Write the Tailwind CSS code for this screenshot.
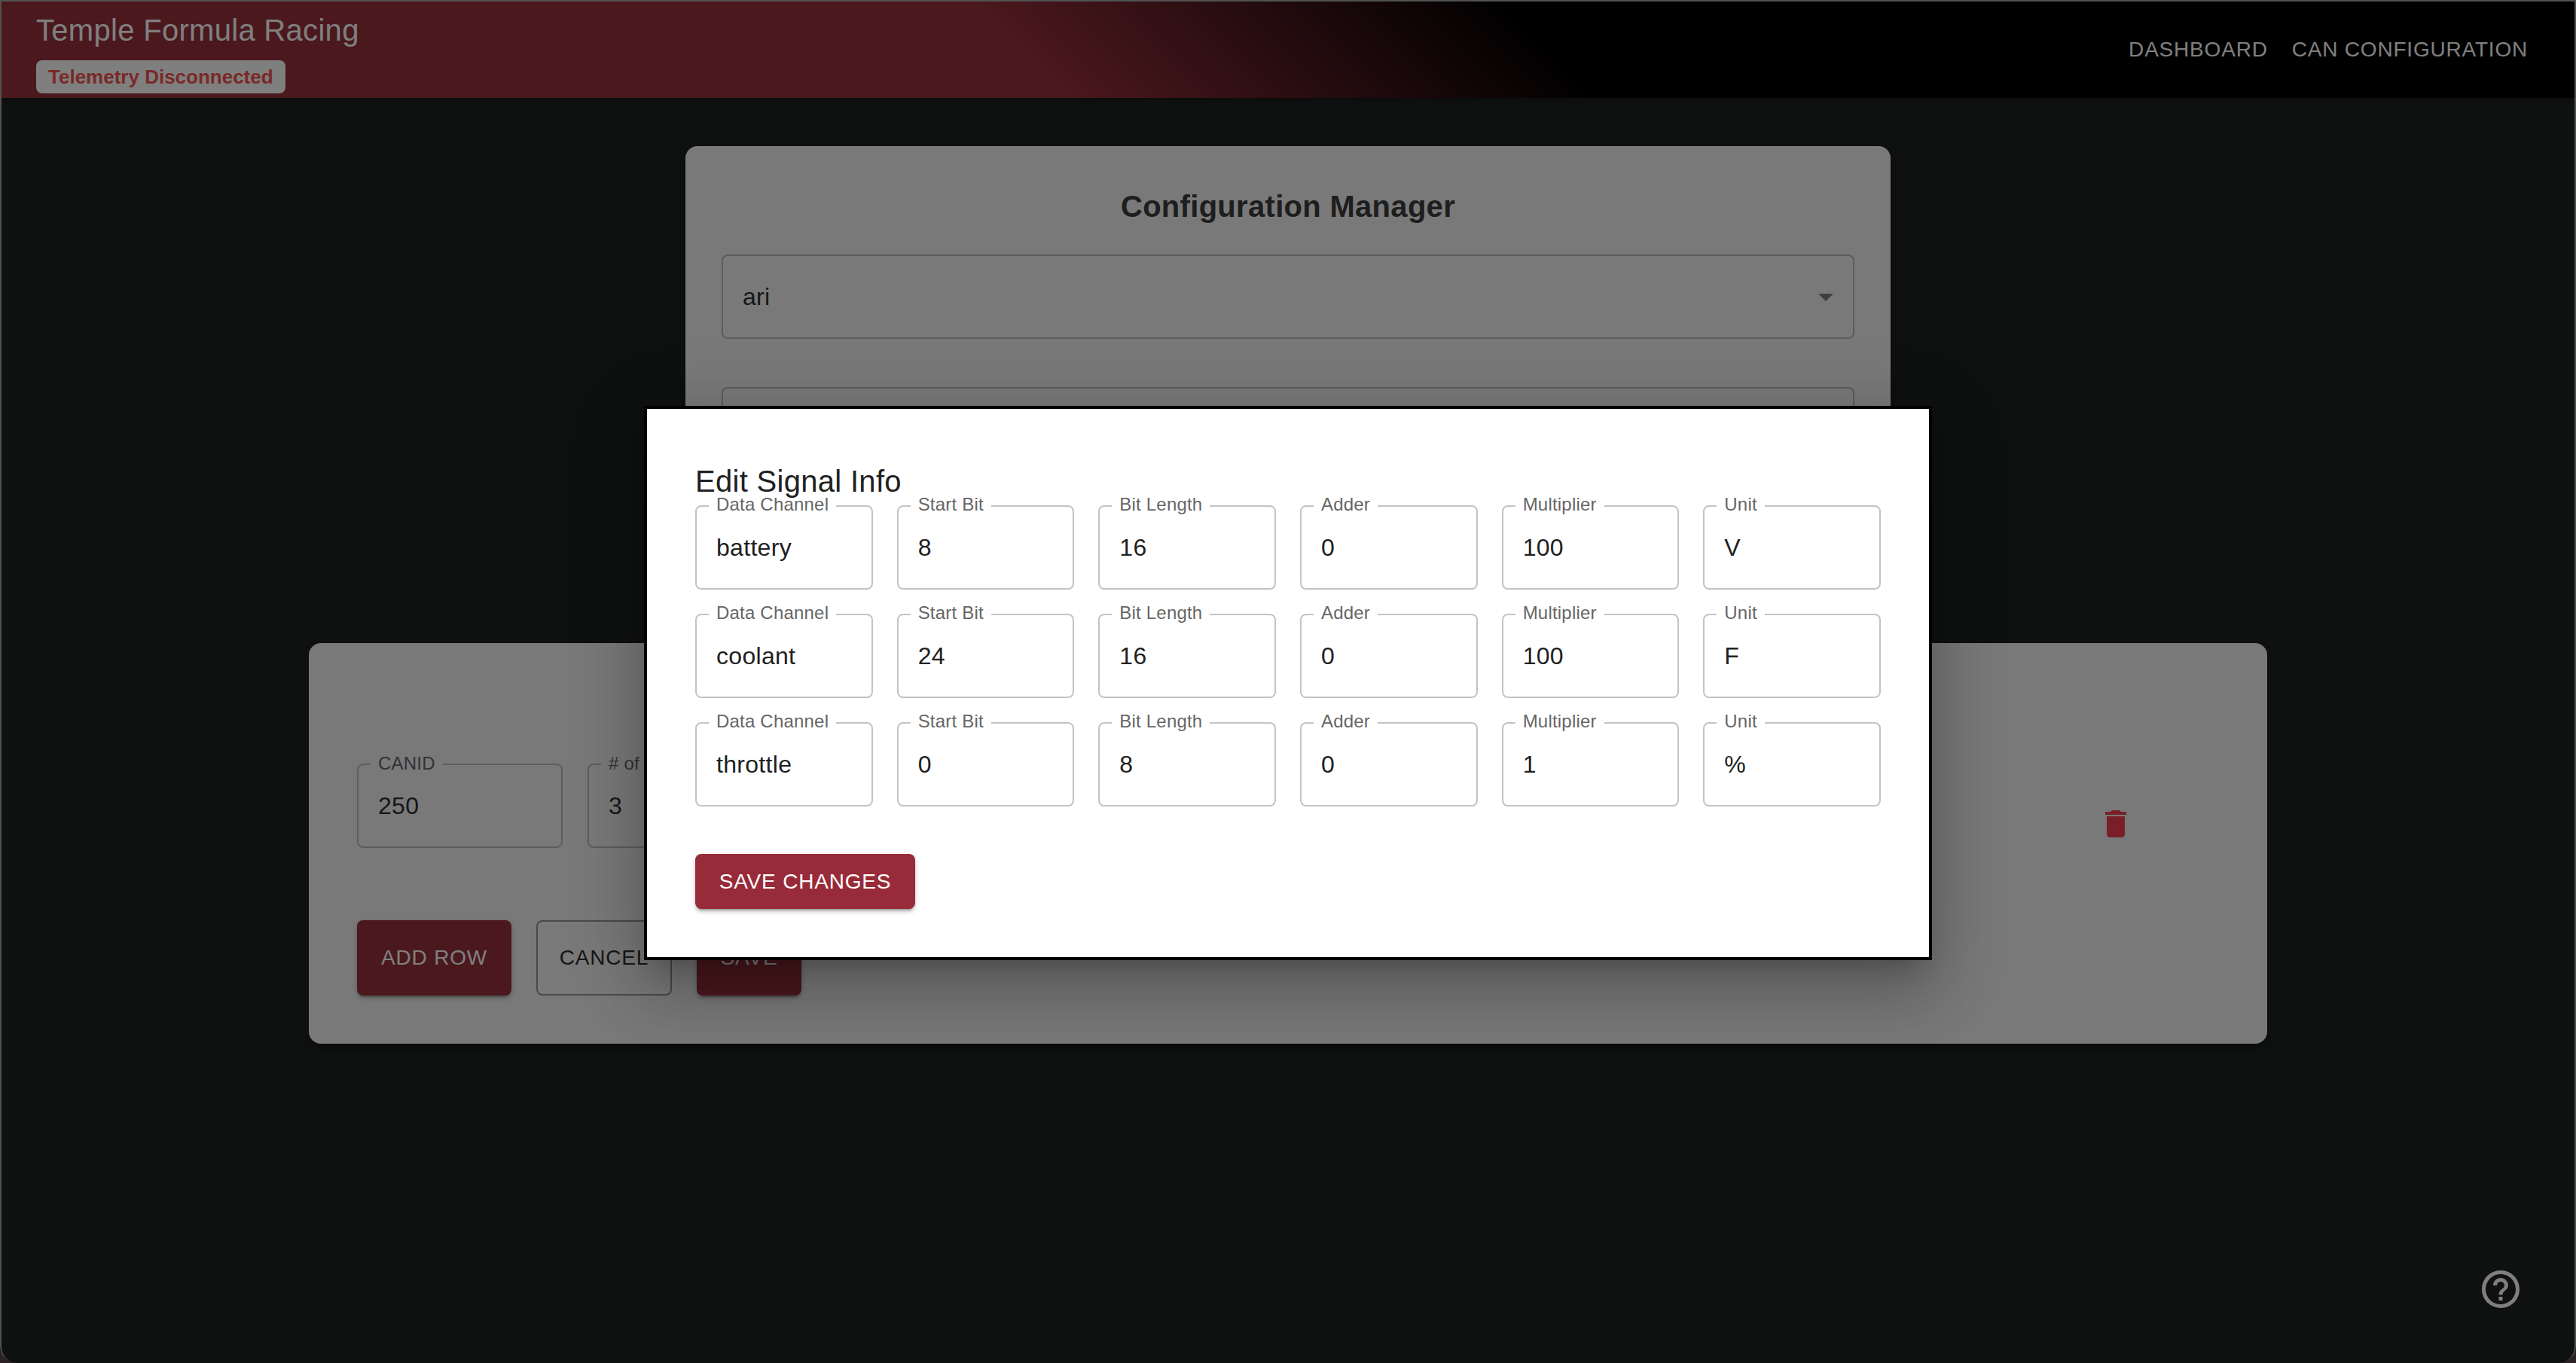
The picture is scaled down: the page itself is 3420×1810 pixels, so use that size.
<!DOCTYPE html>
<html lang="en">
<head>
  <meta charset="UTF-8" />
  <title>Temple Formula Racing</title>
  <script src="https://cdn.jsdelivr.net/npm/@tailwindcss/browser@4"></script>
</head>
<body class="bg-[#2a2226] font-['Liberation_Sans',sans-serif]">
<div class="relative w-[3420px] h-[1810px] overflow-hidden rounded-b-[22px] bg-[#1f2322]">

  <!-- App bar -->
  <header class="h-[130px] flex justify-between items-center pl-[48px] pr-[48px] bg-[linear-gradient(45deg,#96303b_40%,#000_60%)] shadow-[0_4px_8px_-2px_rgba(0,0,0,0.4)]">
    <div class="flex flex-col items-start mt-[2px]">
      <div class="text-[40px] leading-[64px] tracking-[0.3px] text-white">Temple Formula Racing</div>
      <div class="mt-2 h-[44px] px-4 flex items-center rounded-lg bg-white text-[26px] font-bold text-[#f4524e]">Telemetry Disconnected</div>
    </div>
    <nav class="flex items-center mt-[2px] text-[28px] tracking-[0.8px] text-white">
      <a class="px-4">DASHBOARD</a>
      <a class="px-4">CAN CONFIGURATION</a>
    </nav>
  </header>

  <main class="flex flex-col items-center pt-[64px] gap-[64px]">
    <!-- Configuration manager card -->
    <section class="w-[1600px] h-[596px] p-[48px] rounded-2xl bg-[#f2f2f2] shadow-[0_6px_6px_-4px_rgba(0,0,0,0.2),0_6px_8px_rgba(0,0,0,0.14),0_2px_16px_rgba(0,0,0,0.12)]">
      <h2 class="text-[40px] leading-[64px] tracking-[0.3px] font-bold text-center text-[#3c3c3c]">Configuration Manager</h2>
      <div class="relative mt-8 h-[112px] rounded-lg border-2 border-[#bbbbbb] pl-[26px] flex items-center justify-between text-[32px] tracking-[0.3px] text-[#2e2e2e]">
        ari
        <svg class="absolute right-[12px] top-[30px] w-[48px] h-[48px] fill-[#808080]" viewBox="0 0 24 24"><path d="M7 10l5 5 5-5z"/></svg>
      </div>
      <div class="mt-[64px] h-[112px] rounded-lg border-2 border-[#bbbbbb]"></div>
    </section>

    <!-- CAN message card -->
    <section class="w-[2600px] h-[532px] pt-[160px] px-[64px] rounded-2xl bg-[#f2f2f2] shadow-[0_6px_6px_-4px_rgba(0,0,0,0.2),0_6px_8px_rgba(0,0,0,0.14),0_2px_16px_rgba(0,0,0,0.12)]">
      <div class="flex items-start gap-[33px]">
        <div class="relative w-[273px] h-[112px] rounded-lg border-2 border-[#bbbbbb] pl-[26px] flex items-center text-[32px] tracking-[0.3px] text-[#2e2e2e]">
          <span class="absolute left-[16px] -top-[19px] bg-[#f2f2f2] px-[10px] text-[24px] leading-[34px] tracking-[0.2px] text-[#666666]">CANID</span>250
        </div>
        <div class="relative w-[273px] h-[112px] rounded-lg border-2 border-[#bbbbbb] pl-[26px] flex items-center text-[32px] tracking-[0.3px] text-[#2e2e2e]">
          <span class="absolute left-[16px] -top-[19px] bg-[#f2f2f2] px-[10px] text-[24px] leading-[34px] tracking-[0.2px] text-[#666666]">#&nbsp;of&nbsp;Signals</span>3
        </div>
        <svg class="ml-auto mr-[113px] mt-[56px] w-[48px] h-[48px] fill-[#f43c50]" viewBox="0 0 24 24"><path d="M6 19c0 1.1.9 2 2 2h8c1.1 0 2-.9 2-2V7H6v12zM19 4h-3.5l-1-1h-5l-1 1H5v2h14V4z"/></svg>
      </div>
      <div class="mt-[96px] flex gap-[33px] text-[28px] tracking-[0.8px]">
        <button class="w-[205px] h-[100px] rounded-lg bg-[#96303b] text-white shadow-[0_6px_2px_-4px_rgba(0,0,0,0.2),0_4px_4px_rgba(0,0,0,0.14),0_2px_10px_rgba(0,0,0,0.12)]">ADD ROW</button>
        <button class="w-[180px] h-[100px] rounded-lg border-2 border-[#949494] text-[#2e2e2e]">CANCEL</button>
        <button class="w-[139px] h-[100px] rounded-lg bg-[#96303b] text-white shadow-[0_6px_2px_-4px_rgba(0,0,0,0.2),0_4px_4px_rgba(0,0,0,0.14),0_2px_10px_rgba(0,0,0,0.12)]">SAVE</button>
      </div>
    </section>
  </main>

  <!-- Help button -->
  <svg class="absolute right-[70px] bottom-[68px] w-[60px] h-[60px] fill-white" viewBox="0 0 24 24"><path d="M11 18h2v-2h-2v2zm1-16C6.48 2 2 6.48 2 12s4.48 10 10 10 10-4.48 10-10S17.52 2 12 2zm0 18c-4.41 0-8-3.59-8-8s3.59-8 8-8 8 3.59 8 8-3.59 8-8 8zm0-14c-2.21 0-4 1.79-4 4h2c0-1.1.9-2 2-2s2 .9 2 2c0 2-3 1.75-3 5h2c0-2.25 3-2.5 3-5 0-2.21-1.79-4-4-4z"/></svg>

  <!-- Modal -->
  <div class="absolute inset-0 pt-[3px] flex items-center justify-center bg-black/50">
    <div class="w-[1710px] p-[64px] border-4 border-black bg-white shadow-[0_22px_30px_-14px_rgba(0,0,0,0.2),0_48px_76px_6px_rgba(0,0,0,0.14),0_18px_92px_16px_rgba(0,0,0,0.12)]">
      <h2 class="relative z-10 text-[40px] leading-[64px] tracking-[0.3px] text-[#212121]">Edit Signal Info</h2>
      <div class="grid grid-cols-6 gap-8 text-[32px] tracking-[0.3px] text-[#212121]">
        <div class="relative h-[112px] rounded-lg border-2 border-[#c4c4c4] pl-[26px] flex items-center"><span class="absolute left-[16px] -top-[20px] bg-white px-[10px] text-[24px] leading-[34px] tracking-[0.2px] text-[#666666]">Data Channel</span>battery</div>
        <div class="relative h-[112px] rounded-lg border-2 border-[#c4c4c4] pl-[26px] flex items-center"><span class="absolute left-[16px] -top-[20px] bg-white px-[10px] text-[24px] leading-[34px] tracking-[0.2px] text-[#666666]">Start Bit</span>8</div>
        <div class="relative h-[112px] rounded-lg border-2 border-[#c4c4c4] pl-[26px] flex items-center"><span class="absolute left-[16px] -top-[20px] bg-white px-[10px] text-[24px] leading-[34px] tracking-[0.2px] text-[#666666]">Bit Length</span>16</div>
        <div class="relative h-[112px] rounded-lg border-2 border-[#c4c4c4] pl-[26px] flex items-center"><span class="absolute left-[16px] -top-[20px] bg-white px-[10px] text-[24px] leading-[34px] tracking-[0.2px] text-[#666666]">Adder</span>0</div>
        <div class="relative h-[112px] rounded-lg border-2 border-[#c4c4c4] pl-[26px] flex items-center"><span class="absolute left-[16px] -top-[20px] bg-white px-[10px] text-[24px] leading-[34px] tracking-[0.2px] text-[#666666]">Multiplier</span>100</div>
        <div class="relative h-[112px] rounded-lg border-2 border-[#c4c4c4] pl-[26px] flex items-center"><span class="absolute left-[16px] -top-[20px] bg-white px-[10px] text-[24px] leading-[34px] tracking-[0.2px] text-[#666666]">Unit</span>V</div>

        <div class="relative h-[112px] rounded-lg border-2 border-[#c4c4c4] pl-[26px] flex items-center"><span class="absolute left-[16px] -top-[20px] bg-white px-[10px] text-[24px] leading-[34px] tracking-[0.2px] text-[#666666]">Data Channel</span>coolant</div>
        <div class="relative h-[112px] rounded-lg border-2 border-[#c4c4c4] pl-[26px] flex items-center"><span class="absolute left-[16px] -top-[20px] bg-white px-[10px] text-[24px] leading-[34px] tracking-[0.2px] text-[#666666]">Start Bit</span>24</div>
        <div class="relative h-[112px] rounded-lg border-2 border-[#c4c4c4] pl-[26px] flex items-center"><span class="absolute left-[16px] -top-[20px] bg-white px-[10px] text-[24px] leading-[34px] tracking-[0.2px] text-[#666666]">Bit Length</span>16</div>
        <div class="relative h-[112px] rounded-lg border-2 border-[#c4c4c4] pl-[26px] flex items-center"><span class="absolute left-[16px] -top-[20px] bg-white px-[10px] text-[24px] leading-[34px] tracking-[0.2px] text-[#666666]">Adder</span>0</div>
        <div class="relative h-[112px] rounded-lg border-2 border-[#c4c4c4] pl-[26px] flex items-center"><span class="absolute left-[16px] -top-[20px] bg-white px-[10px] text-[24px] leading-[34px] tracking-[0.2px] text-[#666666]">Multiplier</span>100</div>
        <div class="relative h-[112px] rounded-lg border-2 border-[#c4c4c4] pl-[26px] flex items-center"><span class="absolute left-[16px] -top-[20px] bg-white px-[10px] text-[24px] leading-[34px] tracking-[0.2px] text-[#666666]">Unit</span>F</div>

        <div class="relative h-[112px] rounded-lg border-2 border-[#c4c4c4] pl-[26px] flex items-center"><span class="absolute left-[16px] -top-[20px] bg-white px-[10px] text-[24px] leading-[34px] tracking-[0.2px] text-[#666666]">Data Channel</span>throttle</div>
        <div class="relative h-[112px] rounded-lg border-2 border-[#c4c4c4] pl-[26px] flex items-center"><span class="absolute left-[16px] -top-[20px] bg-white px-[10px] text-[24px] leading-[34px] tracking-[0.2px] text-[#666666]">Start Bit</span>0</div>
        <div class="relative h-[112px] rounded-lg border-2 border-[#c4c4c4] pl-[26px] flex items-center"><span class="absolute left-[16px] -top-[20px] bg-white px-[10px] text-[24px] leading-[34px] tracking-[0.2px] text-[#666666]">Bit Length</span>8</div>
        <div class="relative h-[112px] rounded-lg border-2 border-[#c4c4c4] pl-[26px] flex items-center"><span class="absolute left-[16px] -top-[20px] bg-white px-[10px] text-[24px] leading-[34px] tracking-[0.2px] text-[#666666]">Adder</span>0</div>
        <div class="relative h-[112px] rounded-lg border-2 border-[#c4c4c4] pl-[26px] flex items-center"><span class="absolute left-[16px] -top-[20px] bg-white px-[10px] text-[24px] leading-[34px] tracking-[0.2px] text-[#666666]">Multiplier</span>1</div>
        <div class="relative h-[112px] rounded-lg border-2 border-[#c4c4c4] pl-[26px] flex items-center"><span class="absolute left-[16px] -top-[20px] bg-white px-[10px] text-[24px] leading-[34px] tracking-[0.2px] text-[#666666]">Unit</span>%</div>
      </div>
      <button class="mt-[63px] block w-[292px] h-[73px] pt-[2px] rounded-lg bg-[#982b39] text-[28px] tracking-[0.8px] text-white shadow-[0_6px_2px_-4px_rgba(0,0,0,0.2),0_4px_4px_rgba(0,0,0,0.14),0_2px_10px_rgba(0,0,0,0.12)]">SAVE CHANGES</button>
    </div>
  </div>

  <!-- Window edge -->
  <div class="absolute inset-0 rounded-b-[22px] border-2 border-b-0 border-[#505251] pointer-events-none"></div>
</div>
</body>
</html>
